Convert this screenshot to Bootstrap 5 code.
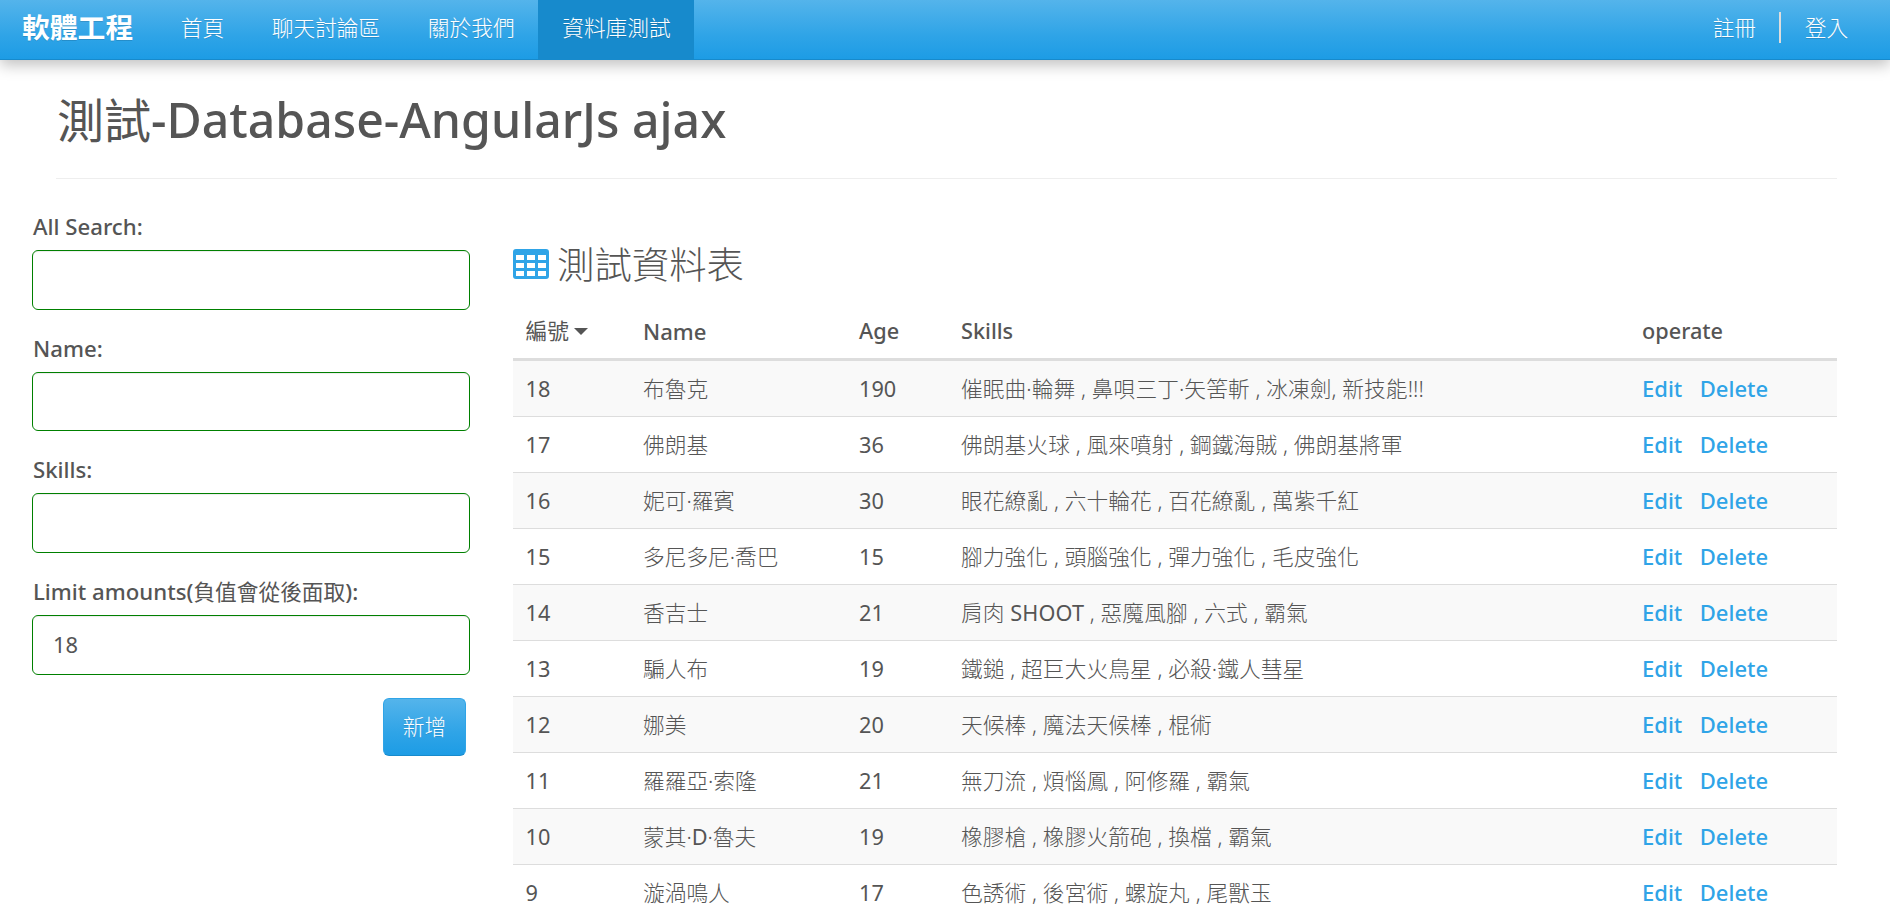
<!DOCTYPE html>
<html lang="zh-Hant">
<head>
<meta charset="utf-8">
<title>測試-Database-AngularJs ajax</title>
<link rel="stylesheet" href="https://cdn.jsdelivr.net/npm/bootstrap@5.3.0/dist/css/bootstrap.min.css">
<style>
html,body{height:100%;overflow:hidden}
body{font-family:"Noto Sans","Noto Sans CJK TC",sans-serif;font-size:21.7px;line-height:30px;color:#555;background:#fff}
.topbar{height:60px;background:linear-gradient(#54b4eb,#2fa4e7 60%,#1d9ce5);border-bottom:1px solid #178acc;box-shadow:0 5px 14px rgba(0,0,0,.25);font-size:21.7px}
.topbar a{color:#fff;text-shadow:0 1px 0 rgba(0,0,0,.15);font-weight:300;padding:0 23.8px;height:59px;line-height:55px}
.topbar a.navbar-brand{font-size:27.8px;font-weight:700;padding:0 0 0 22px;margin:0;width:157px;color:#fff}
.topbar a.active{background:#178acc}
.divider{width:2px;height:31px;background:#ddd;margin-top:12px}
.headline{margin:0 53px 0 56px;height:119px;border-bottom:1px solid #eee;padding:26px 0 0 1px}
.headline h1{font-size:48.2px;line-height:66px;font-weight:500;margin:0;white-space:nowrap}
.headline h1 span{font-size:47px;font-weight:400}
.side{width:438px;margin:33px 0 0 32px}
.side label{display:block;font-weight:500;font-size:22.2px;line-height:30px;height:38px;padding-left:1px}
.side label span{font-weight:400;font-size:21.7px}
.side .form-control{height:59.6px;margin-bottom:24.1px;border:1px solid green;border-radius:6px;padding:0 20px;font-size:21.9px;color:#555;box-shadow:inset 0 1px 1px rgba(0,0,0,.075)}
.btn-add{width:83px;height:58px;margin:-1px 4px 0 0;border:1px solid #2fa4e7;border-bottom-color:#178acc;border-radius:6px;background:linear-gradient(#54b4eb,#2fa4e7 60%,#1d9ce5);color:#fff;font-size:21.7px;font-weight:300;padding:2px 0 0;text-shadow:0 1px 0 rgba(0,0,0,.15)}
.main{width:1324px;margin:60px 53px 0 0}
.main h3{font-size:37.4px;font-weight:300;line-height:51px;height:65px;margin:0;gap:8px}
.people{table-layout:fixed;border-collapse:separate;border-spacing:0;margin:0;width:1324px}
.people>:not(caption)>*>*{padding:0 0 0 13px;height:56px;border-bottom:1px solid #ddd;color:#555;font-weight:300;vertical-align:middle;white-space:nowrap;line-height:30px;box-shadow:none;background:transparent}
.people>tbody>tr:nth-child(odd)>*{background:#f9f9f9}
.people>thead>tr>th{font-weight:500;height:57px;border-bottom:3px solid #ddd}
.people>thead>tr>th:nth-child(2){font-size:22.1px}
.people td:nth-child(4){letter-spacing:.1px}
.people td:nth-child(1),.people td:nth-child(3){font-weight:400}
.people td:nth-child(1),.people th:nth-child(1){padding-left:12.5px}
.people a{color:#2fa4e7;font-weight:500;font-size:22px;text-decoration:none;margin-right:17.5px}
.sort{display:inline-block;border:7px solid transparent;border-top:7px solid #555;border-bottom:0;margin-left:5px;vertical-align:4px}
</style>
</head>
<body>
<nav class="topbar d-flex">
  <a class="navbar-brand" href="#">軟體工程</a>
  <a class="text-decoration-none" href="#">首頁</a>
  <a class="text-decoration-none" href="#">聊天討論區</a>
  <a class="text-decoration-none" href="#">關於我們</a>
  <a class="text-decoration-none active" href="#">資料庫測試</a>
  <a class="text-decoration-none ms-auto pe-0" href="#">註冊</a>
  <span class="divider" style="margin-left:23px"></span>
  <a class="text-decoration-none" style="margin-right:18px" href="#">登入</a>
</nav>
<header class="headline"><h1><span>測試</span>-Database-AngularJs ajax</h1></header>
<div class="d-flex justify-content-between">
  <form class="side">
    <label for="q">All Search:</label><input id="q" class="form-control">
    <label for="n">Name:</label><input id="n" class="form-control">
    <label for="s">Skills:</label><input id="s" class="form-control">
    <label for="l">Limit amounts(<span>負值會從後面取</span>):</label><input id="l" class="form-control" value="18">
    <div class="d-flex justify-content-end"><button type="button" class="btn btn-add">新增</button></div>
  </form>
  <section class="main">
    <h3 class="d-flex">
      <svg width="36" height="30" viewBox="0 0 36 30" style="margin-top:10px"><path fill="#2fa4e7" fill-rule="evenodd" d="M3 0H33Q36 0 36 3V27Q36 30 33 30H3Q0 30 0 27V3Q0 0 3 0ZM3 6V11H11V6ZM14 6V11H22V6ZM25 6V11H33V6ZM3 14V19H11V14ZM14 14V19H22V14ZM25 14V19H33V14ZM3 22V27H11V22ZM14 22V27H22V22ZM25 22V27H33V22Z"/></svg>
      <span>測試資料表</span>
    </h3>
    <table class="table people">
      <colgroup><col style="width:117px"><col style="width:216px"><col style="width:102px"><col style="width:681px"><col style="width:208px"></colgroup>
      <thead><tr><th><span class="fw-normal">編號</span><span class="sort"></span></th><th>Name</th><th>Age</th><th>Skills</th><th>operate</th></tr></thead>
      <tbody>
        <tr><td>18</td><td>布魯克</td><td>190</td><td>催眠曲·輪舞 , 鼻唄三丁·矢筈斬 , 冰凍劍, 新技能!!!</td><td><a href="#">Edit</a><a href="#">Delete</a></td></tr>
        <tr><td>17</td><td>佛朗基</td><td>36</td><td>佛朗基火球 , 風來噴射 , 鋼鐵海賊 , 佛朗基將軍</td><td><a href="#">Edit</a><a href="#">Delete</a></td></tr>
        <tr><td>16</td><td>妮可·羅賓</td><td>30</td><td>眼花繚亂 , 六十輪花 , 百花繚亂 , 萬紫千紅</td><td><a href="#">Edit</a><a href="#">Delete</a></td></tr>
        <tr><td>15</td><td>多尼多尼·喬巴</td><td>15</td><td>腳力強化 , 頭腦強化 , 彈力強化 , 毛皮強化</td><td><a href="#">Edit</a><a href="#">Delete</a></td></tr>
        <tr><td>14</td><td>香吉士</td><td>21</td><td>肩肉 <span class="fw-normal">SHOOT</span> , 惡魔風腳 , 六式 , 霸氣</td><td><a href="#">Edit</a><a href="#">Delete</a></td></tr>
        <tr><td>13</td><td>騙人布</td><td>19</td><td>鐵鎚 , 超巨大火鳥星 , 必殺·鐵人彗星</td><td><a href="#">Edit</a><a href="#">Delete</a></td></tr>
        <tr><td>12</td><td>娜美</td><td>20</td><td>天候棒 , 魔法天候棒 , 棍術</td><td><a href="#">Edit</a><a href="#">Delete</a></td></tr>
        <tr><td>11</td><td>羅羅亞·索隆</td><td>21</td><td>無刀流 , 煩惱鳳 , 阿修羅 , 霸氣</td><td><a href="#">Edit</a><a href="#">Delete</a></td></tr>
        <tr><td>10</td><td>蒙其·<span class="fw-normal">D</span>·魯夫</td><td>19</td><td>橡膠槍 , 橡膠火箭砲 , 換檔 , 霸氣</td><td><a href="#">Edit</a><a href="#">Delete</a></td></tr>
        <tr><td>9</td><td>漩渦鳴人</td><td>17</td><td>色誘術 , 後宮術 , 螺旋丸 , 尾獸玉</td><td><a href="#">Edit</a><a href="#">Delete</a></td></tr>
      </tbody>
    </table>
  </section>
</div>
<script src="https://cdn.jsdelivr.net/npm/bootstrap@5.3.0/dist/js/bootstrap.bundle.min.js"></script>
</body>
</html>
